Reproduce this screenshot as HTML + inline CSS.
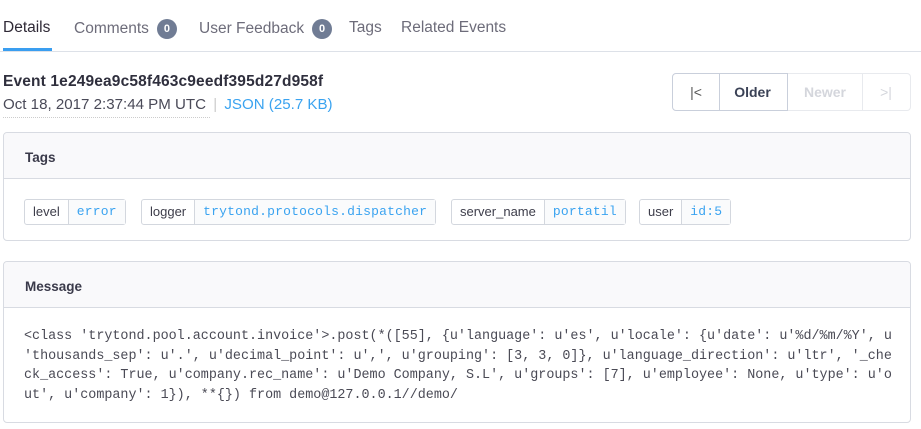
<!DOCTYPE html>
<html><head><style>
body{margin:0;width:921px;height:429px;background:#fff;font-family:"Liberation Sans",sans-serif;color:#2f2936;overflow:hidden;position:relative}
.a{position:absolute}
.tab{position:absolute;top:19px;font-size:15.5px;color:#6d6c7a}
.badge{display:inline-block;width:20px;height:20px;border-radius:10px;background:#707c94;color:#fff;font-size:11px;font-weight:bold;text-align:center;line-height:20px;vertical-align:1px;margin-left:8px}
.panel{position:absolute;left:3px;width:906px;border:1px solid #d8dbe2;border-radius:4px}
.ph{height:45px;background:#f9f9fb;border-bottom:1px solid #d8dbe2;font-weight:bold;font-size:13.5px;line-height:49px;padding-left:21px;color:#3a3a4a;border-radius:4px 4px 0 0}
.tag{position:absolute;top:199px;height:24px;border:1px solid #d3d7de;border-radius:3px;display:flex;font-size:13px;line-height:24px}
.tag .k{padding:0 8px;color:#3d3d4a;border-right:1px solid #d3d7de}
.tag .v{padding:0 8px;color:#3aa3f0;background:#fafbfc;font-family:"Liberation Mono",monospace;font-size:13px;letter-spacing:.2px}
.btn{position:absolute;top:73px;height:36px;border:1px solid #c9cfdb;font-size:14px;font-weight:bold;line-height:36px;text-align:center}
</style></head><body>
<div class="tab" style="left:3px;color:#2f2936">Details</div>
<div class="a" style="left:3px;top:48px;width:49px;height:3px;background:#3a9ef0"></div>
<div class="tab" style="left:74px">Comments<span class="badge">0</span></div>
<div class="tab" style="left:199px">User Feedback<span class="badge">0</span></div>
<div class="tab" style="left:349px">Tags</div>
<div class="tab" style="left:401px">Related Events</div>
<div class="a" style="left:0;top:51px;width:921px;height:1px;background:#dde1e8"></div>

<div class="a" style="left:3px;top:73px;font-size:15.5px;font-weight:bold;color:#2f2f3d;letter-spacing:.15px">Event 1e249ea9c58f463c9eedf395d27d958f</div>
<div class="a" style="left:3px;top:96px;font-size:15.1px;color:#4a4a58">Oct 18, 2017 2:37:44 PM UTC <span style="color:#ccc;margin:0 3px">|</span> <span style="color:#3aa3f0">JSON (25.7 KB)</span></div>
<div class="a" style="left:3px;top:117px;width:207px;border-top:1px dotted #ccc"></div>

<div class="btn" style="left:672px;width:46px;border-radius:4px 0 0 4px;color:#555;font-weight:normal">|&lt;</div>
<div class="btn" style="left:718px;width:69px;border-left:none;color:#3b4256">Older</div>
<div class="btn" style="left:788px;width:74px;border-color:#e8eaee;border-left:none;color:#d4d6dc">Newer</div>
<div class="btn" style="left:862px;width:48px;border-color:#e8eaee;border-left:none;border-radius:0 4px 4px 0;color:#d4d6dc;font-weight:normal">&gt;|</div>

<div class="panel" style="top:132px;height:107px"><div class="ph">Tags</div></div>
<div class="tag" style="left:24px"><span class="k">level</span><span class="v">error</span></div>
<div class="tag" style="left:141px"><span class="k">logger</span><span class="v">trytond.protocols.dispatcher</span></div>
<div class="tag" style="left:451px"><span class="k">server_name</span><span class="v">portatil</span></div>
<div class="tag" style="left:639px"><span class="k">user</span><span class="v">id:5</span></div>

<div class="panel" style="top:261px;height:160px"><div class="ph">Message</div>
<pre style="margin:0;padding:19px 0 0 20px;font-family:'Liberation Mono',monospace;font-size:13.4px;line-height:19.5px;color:#4a4a55">&lt;class 'trytond.pool.account.invoice'&gt;.post(*([55], {u'language': u'es', u'locale': {u'date': u'%d/%m/%Y', u
'thousands_sep': u'.', u'decimal_point': u',', u'grouping': [3, 3, 0]}, u'language_direction': u'ltr', '_che
ck_access': True, u'company.rec_name': u'Demo Company, S.L', u'groups': [7], u'employee': None, u'type': u'o
ut', u'company': 1}), **{}) from demo@127.0.0.1//demo/</pre></div>
</body></html>
